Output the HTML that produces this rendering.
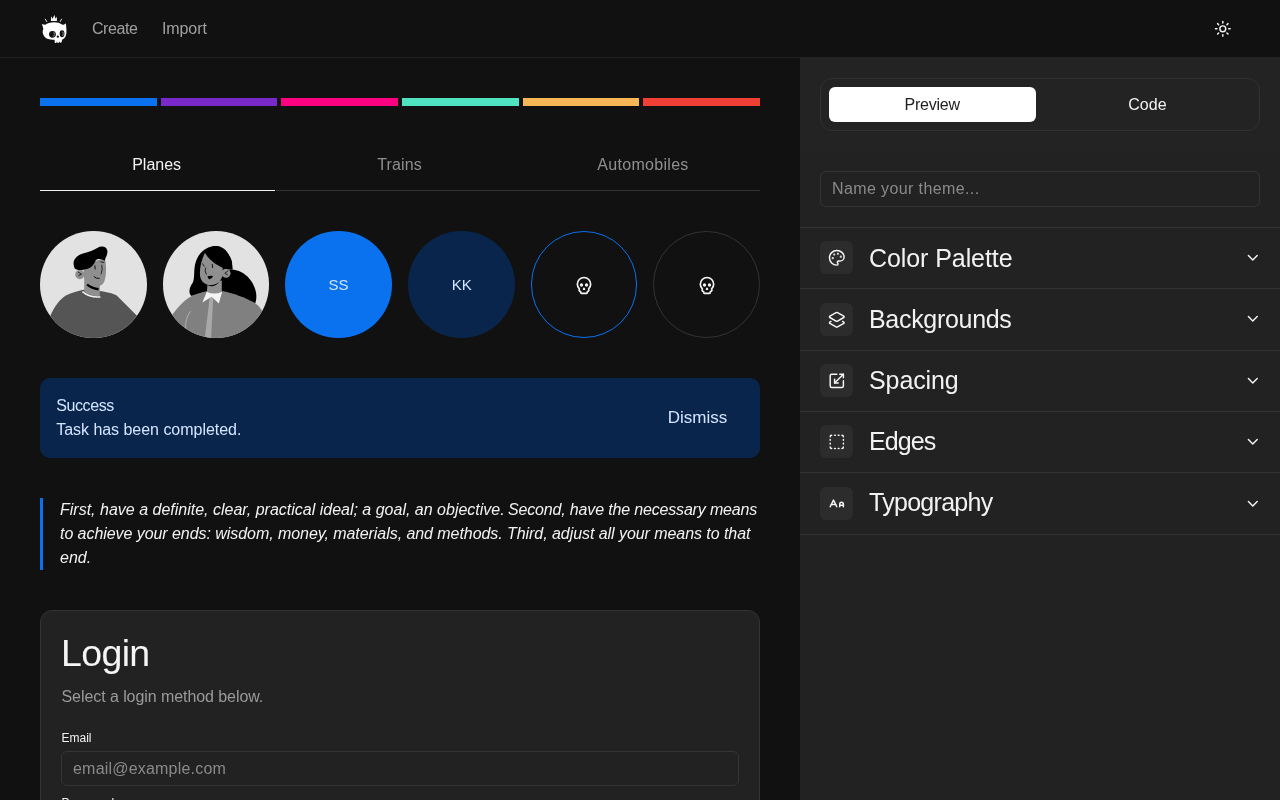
<!DOCTYPE html>
<html lang="en">
<head>
<meta charset="utf-8">
<title>Theme Builder</title>
<style>
*{box-sizing:border-box;margin:0;padding:0}
html,body{width:1280px;height:800px;overflow:hidden;background:#111111}
body{font-family:"Liberation Sans",sans-serif;color:#ededed;font-size:16px;position:relative}
#root{position:absolute;left:0;top:0;width:1280px;height:800px;overflow:hidden;will-change:transform}
.abs{position:absolute}
.t{position:absolute;white-space:nowrap;line-height:24px;font-size:16px}
/* header */
#hdr{position:absolute;left:0;top:0;width:1280px;height:58px;background:#111111;border-bottom:1px solid #202020}
/* right panel */
#panel{position:absolute;left:800px;top:57px;width:480px;height:743px;background:#222222}
#ptop{position:absolute;left:0;top:0;width:480px;height:94px;background:#232323}
/* swatches */
.sw{position:absolute;top:98px;height:8px;width:116.67px}
/* tabs */
#tabline{position:absolute;left:40px;top:190px;width:720px;height:1px;background:#333333}
#tabact{position:absolute;left:40px;top:190px;width:235px;height:1px;background:#f2f2f2}
/* avatars */
.av{position:absolute;top:231px;width:106.67px;height:106.67px;border-radius:50%;overflow:hidden}
/* alert */
#alert{position:absolute;left:40px;top:378px;width:720px;height:80px;border-radius:10px;background:#0a254c}
/* quote */
#qbar{position:absolute;left:40px;top:498px;width:3px;height:72px;background:#0a72ef}
/* card */
#card{position:absolute;left:40px;top:610px;width:720px;height:260px;border:1px solid #333333;border-radius:12px;background:#222222}
.inp{position:absolute;border:1px solid #353535;border-radius:6px;background:transparent}
/* panel sections */
.div{position:absolute;left:800px;width:480px;height:1px;background:#333333}
.ib{position:absolute;left:820px;width:33px;height:33px;border-radius:6px;background:#2c2c2c}
.ib svg{position:absolute;left:7.7px;top:7.7px;width:17.6px;height:17.6px}
.h{position:absolute;left:869px;white-space:nowrap;font-size:25px;line-height:34px;color:#f2f2f2}
</style>
</head>
<body>
<div id="root">
<div id="hdr"></div>
<div id="panel"><div id="ptop"></div></div>

<!-- logo -->
<svg class="abs" id="logo" style="left:38px;top:12px;width:34px;height:34px" viewBox="0 0 800 800">
<path fill="#ffffff" d="M90,285 C105,330 120,360 125,400 C100,450 105,520 150,575 C190,625 260,650 390,655 L395,715 Q420,742 442,712 L448,688 L455,718 Q478,745 498,714 L504,688 L511,712 Q535,735 558,703 L566,650 C620,630 660,580 668,500 C672,440 666,330 655,265 C630,290 605,300 578,300 C520,255 440,238 370,240 C290,242 215,265 170,300 C140,300 115,295 90,285 Z"/>
<circle cx="340" cy="525" r="80" fill="#111111"/>
<ellipse cx="566" cy="512" rx="56" ry="80" fill="#111111"/>
<path d="M378,480 Q405,525 372,575" stroke="#d8d8d8" stroke-width="13" fill="none" stroke-linecap="round"/>
<path d="M585,470 Q612,512 585,560" stroke="#9a9a9a" stroke-width="20" fill="none" stroke-linecap="round"/>
<ellipse cx="466" cy="580" rx="27" ry="25" fill="#111111"/>
<path fill="#f4f4f4" d="M305,210 L305,100 L342,160 L385,72 L414,160 L445,106 L445,210 Z"/>
<path d="M172,168 L205,225" stroke="#ffffff" stroke-width="20" stroke-linecap="round"/>
<path d="M555,168 L522,225" stroke="#ffffff" stroke-width="20" stroke-linecap="round"/>
</svg>
<svg class="abs" id="sun" style="left:1214.3px;top:20.4px;width:17.6px;height:17.6px" fill="none" stroke="#f5f5f5" stroke-width="2" stroke-linecap="round" stroke-linejoin="round" viewBox="0 0 24 24"><circle cx="12" cy="12" r="4"/><path d="M12 2v2"/><path d="M12 20v2"/><path d="m4.93 4.93 1.41 1.41"/><path d="m17.66 17.660 1.410 1.410"/><path d="M2 12h2"/><path d="M20 12h2"/><path d="m6.340 17.660-1.410 1.410"/><path d="m19.070 4.930-1.410 1.410"/></svg>
<!-- header -->
<span class="t" id="tCreate" style="left:92px;top:16.5px;color:#a0a0a0;letter-spacing:-0.45px">Create</span>
<span class="t" id="tImport" style="left:162px;top:16.5px;color:#a0a0a0;letter-spacing:-0.1px">Import</span>

<!-- swatches -->
<div class="sw" style="left:40px;background:#0a72ef"></div>
<div class="sw" style="left:160.67px;background:#7928ca"></div>
<div class="sw" style="left:281.33px;background:#ff0080"></div>
<div class="sw" style="left:402px;background:#50e3c2"></div>
<div class="sw" style="left:522.67px;background:#f7b755"></div>
<div class="sw" style="left:643.33px;background:#f04035"></div>

<!-- tabs -->
<div id="tabline"></div><div id="tabact"></div><div class="abs" style="left:275px;top:190px;width:1px;height:1px;background:#111111"></div>
<span class="t" id="tPlanes" style="left:132.2px;top:152.5px;color:#f2f2f2">Planes</span>
<span class="t" id="tTrains" style="left:377.2px;top:152.5px;color:#8f8f8f;letter-spacing:0.15px">Trains</span>
<span class="t" id="tAuto" style="left:597.3px;top:152.5px;color:#8f8f8f;letter-spacing:0.3px">Automobiles</span>

<!-- avatars -->
<div class="av" id="av1" style="left:40px;background:#e2e2e2"><svg viewBox="33.3 40 711.1 711.1" width="106.67" height="106.67" style="display:block">
<path fill="#555555" d="M100,610 C130,540 170,492 205,470 C245,450 290,440 322,432 L432,440 C470,445 520,455 545,470 L700,625 L770,770 L20,770 Z"/>
<path fill="#8f8f8f" d="M328,345 L328,442 Q372,482 432,472 L432,385 Z"/>
<path d="M348,396 Q378,424 424,428" stroke="#000" stroke-width="16" fill="none"/>
<path d="M316,444 Q366,486 436,480" stroke="#f2f2f2" stroke-width="10" fill="none"/>
<path fill="#8f8f8f" d="M322,262 L466,222 C478,280 476,340 462,376 C450,405 420,413 395,408 C360,402 336,386 328,352 Z"/>
<circle cx="299" cy="330" r="31" fill="#8f8f8f"/>
<path d="M287,314 L310,328 L289,338" stroke="#000" stroke-width="5" fill="none"/>
<path fill="#000" d="M266,292 C242,245 268,205 320,190 C362,178 392,168 415,153 C442,138 476,140 482,170 C487,196 470,216 463,240 C446,226 420,222 404,236 C396,256 386,276 360,288 C330,300 292,304 278,296 Z"/>
<path d="M399,272 L401,293" stroke="#000" stroke-width="6" stroke-linecap="round"/>
<path d="M446,268 Q452,300 441,326" stroke="#000" stroke-width="5" fill="none" stroke-linecap="round"/>
<path d="M438,246 L460,250" stroke="#000" stroke-width="5" stroke-linecap="round"/>
<path d="M394,345 Q408,360 428,356" stroke="#000" stroke-width="6" fill="none" stroke-linecap="round"/>
</svg></div>
<div class="av" id="av2" style="left:162.67px;background:#e2e2e2"><svg viewBox="37.8 40 711.1 711.1" width="106.67" height="106.67" style="display:block">
<path fill="#000" d="M390,140 C330,140 275,182 255,250 C240,300 252,350 236,385 C214,415 204,452 228,474 L340,445 L440,445 L470,300 L500,292 C500,220 460,140 390,140 Z"/>
<path fill="#000" d="M480,300 C560,288 640,360 658,450 C663,480 659,505 652,522 L430,445 L440,330 Z"/>
<path fill="#808080" d="M95,605 C140,540 190,492 235,470 C270,455 310,445 335,440 L430,440 C500,450 600,490 650,520 C682,540 702,572 715,605 L770,770 L20,770 Z"/>
<path fill="#a9a9a9" d="M350,478 L373,478 L358,760 L316,760 Z"/>
<path d="M222,575 C195,610 184,652 190,692" stroke="#b8b8b8" stroke-width="6" fill="none"/>
<path fill="#8f8f8f" d="M335,385 L430,370 L430,462 L380,488 L330,452 Z"/>
<path fill="#000" d="M322,388 Q365,432 412,382 Q366,408 322,388 Z"/>
<path fill="#f4f4f4" d="M330,445 L300,517 L362,478 L410,524 L432,445 Q380,470 330,445 Z"/>
<path fill="#8f8f8f" d="M318,185 C294,232 280,290 285,340 C290,382 330,406 366,400 C402,392 430,370 436,330 L436,270 C400,262 350,236 318,185 Z"/>
<circle cx="458" cy="322" r="30" fill="#8f8f8f"/>
<path d="M472,306 L450,322 L470,334" stroke="#000" stroke-width="5" fill="none"/>
<path fill="#000" d="M318,183 C348,240 400,270 440,286 L502,300 L497,240 C472,170 420,140 390,140 C360,140 334,158 318,183 Z"/>
<path d="M300,258 Q310,262 312,274" stroke="#000" stroke-width="5" fill="none" stroke-linecap="round"/>
<path d="M322,286 Q312,306 326,328" stroke="#000" stroke-width="5" fill="none" stroke-linecap="round"/>
<path d="M366,262 L369,284" stroke="#000" stroke-width="6" stroke-linecap="round"/>
<path fill="#000" d="M334,342 Q352,336 372,340 Q362,364 346,362 Q336,356 334,342 Z"/>
</svg></div>
<div class="av" id="av3" style="left:285.33px;background:#0a72ef"></div>
<div class="av" id="av4" style="left:408px;background:#0a254c"></div>
<div class="av" id="av5" style="left:530.67px;border:1px solid #0a72ef"></div>
<div class="av" id="av6" style="left:653.33px;border:1px solid #333333"></div>
<span class="t" id="tSS" style="left:328.4px;top:273px;font-size:15px;color:#d3e5ff">SS</span>
<span class="t" id="tKK" style="left:451.7px;top:273px;font-size:15px;color:#d3e5ff">KK</span>

<svg class="abs" style="left:574.05px;top:274.6px;width:20px;height:20px" fill="none" stroke="#f5f5f5" stroke-width="2" stroke-linecap="round" stroke-linejoin="round" viewBox="0 0 24 24"><path d="m12.5 17-.5-1-.5 1h1z"/><path d="M15 22a1 1 0 0 0 1-1v-1a2 2 0 0 0 1.56-3.25 8 8 0 1 0-11.12 0A2 2 0 0 0 8 20v1a1 1 0 0 0 1 1z"/><circle cx="15" cy="12" r="1"/><circle cx="9" cy="12" r="1"/></svg>
<svg class="abs" style="left:696.7px;top:274.6px;width:20px;height:20px" fill="none" stroke="#f5f5f5" stroke-width="2" stroke-linecap="round" stroke-linejoin="round" viewBox="0 0 24 24"><path d="m12.5 17-.5-1-.5 1h1z"/><path d="M15 22a1 1 0 0 0 1-1v-1a2 2 0 0 0 1.56-3.25 8 8 0 1 0-11.12 0A2 2 0 0 0 8 20v1a1 1 0 0 0 1 1z"/><circle cx="15" cy="12" r="1"/><circle cx="9" cy="12" r="1"/></svg>
<!-- alert -->
<div id="alert"></div>
<span class="t" id="tSuccess" style="left:56.2px;top:394px;color:#d3e5ff;letter-spacing:-0.4px">Success</span>
<span class="t" id="tTask" style="left:56.2px;top:418px;color:#d3e5ff;letter-spacing:-0.03px">Task has been completed.</span>
<span class="t" id="tDismiss" style="left:667.8px;top:405.5px;font-size:17px;color:#d3e5ff">Dismiss</span>

<!-- quote -->
<div id="qbar"></div>
<span class="t" id="q1" style="left:60px;top:498px;font-style:italic;color:#f2f2f2;letter-spacing:0px">First, have a definite, clear, practical ideal; a goal, an objective.</span>
<span class="t" id="q1b" style="left:508px;top:498px;font-style:italic;color:#f2f2f2;letter-spacing:-0.165px">Second, have the necessary means</span>
<span class="t" id="q2" style="left:60px;top:522px;font-style:italic;color:#f2f2f2;letter-spacing:-0.058px">to achieve your ends: wisdom, money, materials, and methods. Third, adjust all your means to that</span>
<span class="t" id="q3" style="left:60px;top:546px;font-style:italic;color:#f2f2f2">end.</span>

<!-- card -->
<div id="card"></div>
<span class="t" id="tLogin" style="left:61px;top:630px;font-size:37.5px;line-height:46px;color:#f5f5f5;letter-spacing:-0.64px">Login</span>
<span class="t" id="tSelect" style="left:61.5px;top:684.5px;color:#9a9a9a;letter-spacing:-0.07px">Select a login method below.</span>
<span class="t" id="tEmail" style="left:61.5px;top:727.8px;font-size:12px;line-height:20px;color:#f2f2f2">Email</span>
<div class="inp" style="left:61px;top:751px;width:678px;height:35px"></div>
<span class="t" id="tEmailPh" style="left:73px;top:756.5px;color:#8a8a8a;letter-spacing:0.2px">email@example.com</span>
<span class="t" id="tPassword" style="left:61.5px;top:793.3px;font-size:12px;line-height:20px;color:#f2f2f2">Password</span>

<!-- panel: tabs switcher -->
<div class="abs" style="left:820px;top:78px;width:440px;height:53px;border:1px solid #313131;border-radius:12px"></div>
<div class="abs" style="left:829px;top:87px;width:207px;height:35px;border-radius:6px;background:#ffffff"></div>
<span class="t" id="tPreview" style="left:904.5px;top:92.6px;color:#222222;letter-spacing:-0.22px">Preview</span>
<span class="t" id="tCode" style="left:1128.3px;top:92.6px;color:#f2f2f2">Code</span>

<!-- theme name -->
<div class="inp" style="left:820px;top:171px;width:440px;height:36px"></div>
<span class="t" id="tName" style="left:832px;top:176.5px;color:#8a8a8a;letter-spacing:0.39px">Name your theme...</span>

<!-- sections -->
<div class="div" style="top:227px"></div>
<div class="div" style="top:288px"></div>
<div class="div" style="top:350px"></div>
<div class="div" style="top:411px"></div>
<div class="div" style="top:472px"></div>
<div class="div" style="top:534px"></div>

<div class="ib" style="top:241px"><svg fill="none" stroke="#f5f5f5" stroke-width="2" stroke-linecap="round" stroke-linejoin="round" viewBox="0 0 24 24"><circle cx="13.5" cy="6.5" r=".5" fill="#f5f5f5"/><circle cx="17.5" cy="10.5" r=".5" fill="#f5f5f5"/><circle cx="8.5" cy="7.5" r=".5" fill="#f5f5f5"/><circle cx="6.5" cy="12.5" r=".5" fill="#f5f5f5"/><path d="M12 2C6.5 2 2 6.5 2 12s4.5 10 10 10c.926 0 1.648-.746 1.648-1.688 0-.437-.18-.835-.437-1.125-.29-.289-.438-.652-.438-1.125a1.64 1.64 0 0 1 1.668-1.668h1.996c3.051 0 5.555-2.503 5.555-5.554C21.965 6.012 17.461 2 12 2z"/></svg></div>
<div class="ib" style="top:303px"><svg fill="none" stroke="#f5f5f5" stroke-width="2" stroke-linecap="round" stroke-linejoin="round" viewBox="0 0 24 24"><path d="M13 13.74a2 2 0 0 1-2 0L2.5 8.87a1 1 0 0 1 0-1.74L11 2.26a2 2 0 0 1 2 0l8.5 4.87a1 1 0 0 1 0 1.74z"/><path d="m20 14.285 1.5.845a1 1 0 0 1 0 1.74L13 21.74a2 2 0 0 1-2 0l-8.5-4.87a1 1 0 0 1 0-1.74l1.5-.845"/></svg></div>
<div class="ib" style="top:364px"><svg fill="none" stroke="#f5f5f5" stroke-width="2" stroke-linecap="round" stroke-linejoin="round" viewBox="0 0 24 24"><path d="M12 3H5a2 2 0 0 0-2 2v14a2 2 0 0 0 2 2h14a2 2 0 0 0 2-2v-7"/><path d="M14 15H9v-5"/><path d="M16 3h5v5"/><path d="M21 3 9 15"/></svg></div>
<div class="ib" style="top:425px"><svg fill="none" stroke="#f5f5f5" stroke-width="2" stroke-linecap="round" stroke-linejoin="round" viewBox="0 0 24 24"><path d="M5 3a2 2 0 0 0-2 2"/><path d="M19 3a2 2 0 0 1 2 2"/><path d="M21 19a2 2 0 0 1-2 2"/><path d="M5 21a2 2 0 0 1-2-2"/><path d="M9 3h1"/><path d="M9 21h1"/><path d="M14 3h1"/><path d="M14 21h1"/><path d="M3 9v1"/><path d="M21 9v1"/><path d="M3 14v1"/><path d="M21 14v1"/></svg></div>
<div class="ib" style="top:487px"><svg fill="none" stroke="#f5f5f5" stroke-width="2" stroke-linecap="round" stroke-linejoin="round" viewBox="0 0 24 24"><path d="M21 14h-5"/><path d="M16 16v-3.5a2.5 2.5 0 0 1 5 0V16"/><path d="M4.5 13h6"/><path d="m3 16 4.500-9 4.500 9"/></svg></div>

<span class="h" id="h1" style="top:240.5px;letter-spacing:-0.08px">Color Palette</span>
<span class="h" id="h2" style="top:301.5px;letter-spacing:-0.31px">Backgrounds</span>
<span class="h" id="h3" style="top:363px;letter-spacing:-0.1px">Spacing</span>
<span class="h" id="h4" style="top:424px;letter-spacing:-0.9px">Edges</span>
<span class="h" id="h5" style="top:485px;letter-spacing:-0.71px">Typography</span>

<svg class="abs" style="left:1243.5px;top:249.0px;width:17.6px;height:17.6px" fill="none" stroke="#f5f5f5" stroke-width="2" stroke-linecap="round" stroke-linejoin="round" viewBox="0 0 24 24"><path d="m6 9 6 6 6-6"/></svg>
<svg class="abs" style="left:1243.5px;top:310.4px;width:17.6px;height:17.6px" fill="none" stroke="#f5f5f5" stroke-width="2" stroke-linecap="round" stroke-linejoin="round" viewBox="0 0 24 24"><path d="m6 9 6 6 6-6"/></svg>
<svg class="abs" style="left:1243.5px;top:372.0px;width:17.6px;height:17.6px" fill="none" stroke="#f5f5f5" stroke-width="2" stroke-linecap="round" stroke-linejoin="round" viewBox="0 0 24 24"><path d="m6 9 6 6 6-6"/></svg>
<svg class="abs" style="left:1243.5px;top:433.4px;width:17.6px;height:17.6px" fill="none" stroke="#f5f5f5" stroke-width="2" stroke-linecap="round" stroke-linejoin="round" viewBox="0 0 24 24"><path d="m6 9 6 6 6-6"/></svg>
<svg class="abs" style="left:1243.5px;top:495.0px;width:17.6px;height:17.6px" fill="none" stroke="#f5f5f5" stroke-width="2" stroke-linecap="round" stroke-linejoin="round" viewBox="0 0 24 24"><path d="m6 9 6 6 6-6"/></svg>
</div>
</body>
</html>
